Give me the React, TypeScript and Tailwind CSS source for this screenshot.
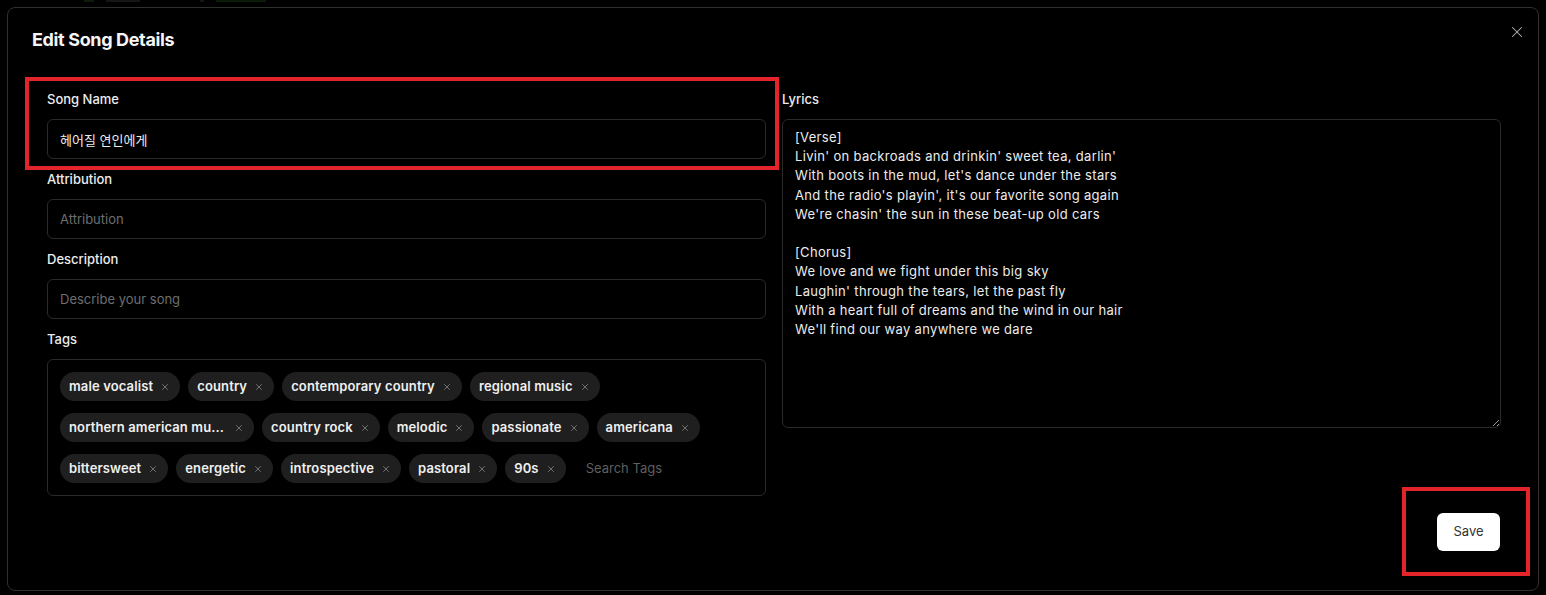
import { X } from 'lucide-react';

const tags = [
  'male vocalist',
  'country',
  'contemporary country',
  'regional music',
  'northern american mu...',
  'country rock',
  'melodic',
  'passionate',
  'americana',
  'bittersweet',
  'energetic',
  'introspective',
  'pastoral',
  '90s',
];

const lyrics = `[Verse]
Livin' on backroads and drinkin' sweet tea, darlin'
With boots in the mud, let's dance under the stars
And the radio's playin', it's our favorite song again
We're chasin' the sun in these beat-up old cars

[Chorus]
We love and we fight under this big sky
Laughin' through the tears, let the past fly
With a heart full of dreams and the wind in our hair
We'll find our way anywhere we dare`;

function Field(props: { label: string; children: React.ReactNode }) {
  return (
    <div className="flex flex-col gap-[10px]">
      <label className="h-5 text-[13px] font-medium leading-5 text-[#ececec]">{props.label}</label>
      {props.children}
    </div>
  );
}

const inputCls =
  'h-10 w-full rounded-md border border-[#2a2a2a] bg-black px-3 text-[13px] text-[#ececec] placeholder-[#6e6e6e] outline-none';

function Tag(props: { name: string }) {
  const cut = props.name.endsWith('...');
  return (
    <span className="flex h-[29px] items-center gap-[7px] rounded-full bg-[#1f1f1f] pl-[9px] pr-[10px] text-[13px] font-semibold tracking-[0.01em] text-[#f0f0f0]">
      <span className={cut ? 'mr-[3px] whitespace-nowrap' : 'whitespace-nowrap'}>{props.name}</span>
      <X size={10} strokeWidth={1.8} className="text-[#8a8a8a]" />
    </span>
  );
}

export default function App() {
  return (
    <div
      className="relative min-h-[595px] w-full bg-black"
      style={{ fontFamily: 'Inter, "Noto Sans CJK KR", sans-serif' }}
    >
      {/* faint page content peeking above the dialog */}
      <div className="flex h-[3px] items-start gap-3 pl-[84px]">
        <div className="h-[2px] w-[10px] bg-[#0e1a0a]" />
        <div className="h-[2px] w-[34px] bg-[#151515]" />
        <div className="ml-12 h-[2px] w-[4px] bg-[#151515]" />
        <div className="h-[2px] w-[50px] bg-[#0c1a08]" />
      </div>

      <div className="relative mx-[7px] mt-[4px] h-[584px] rounded-lg border border-[#303030] bg-black px-6 pt-5">
        <button className="absolute right-[12px] top-[15px] text-[#b5b5b5]" aria-label="Close">
          <X size={18} strokeWidth={1.4} />
        </button>

        <h2 className="text-lg font-bold leading-6 tracking-[-0.02em] text-[#f5f5f5]">Edit Song Details</h2>

        <div className="mt-[37px] pl-[15px] pr-[13px]">
          <div className="grid grid-cols-2 gap-4">
            <div className="flex flex-col gap-[10px]">
              <Field label="Song Name">
                <input className={inputCls} defaultValue="헤어질 연인에게" readOnly />
              </Field>
              <Field label="Attribution">
                <input className={inputCls} placeholder="Attribution" />
              </Field>
              <Field label="Description">
                <input className={inputCls} placeholder="Describe your song" />
              </Field>
              <Field label="Tags">
                <div className="flex flex-wrap items-center gap-x-2 gap-y-3 rounded-md border border-[#2a2a2a] p-3">
                  {tags.map((t) => (
                    <Tag key={t} name={t} />
                  ))}
                  <input
                    className="ml-3 w-28 bg-transparent text-[13px] text-[#ececec] placeholder-[#5f5f5f] outline-none"
                    placeholder="Search Tags"
                  />
                </div>
              </Field>
            </div>

            <div>
              <Field label="Lyrics">
                <textarea
                  readOnly
                  defaultValue={lyrics}
                  className="h-[309px] w-full resize-y rounded-md border border-[#2a2a2a] bg-black px-3 pb-2 pt-[8px] text-[13px] leading-[19.2px] tracking-[0.025em] text-[#ececec] outline-none [color-scheme:dark]"
                />
              </Field>
            </div>
          </div>

          <div className="mt-[17px] flex justify-end pr-px">
            <button className="h-[38px] w-[63px] rounded-md bg-white text-[13px] text-[#333]">Save</button>
          </div>
        </div>
      </div>

      {/* annotation boxes */}
      <div className="pointer-events-none absolute left-[25px] top-[77px] h-[93px] w-[754px] border-4 border-[#e3242b]" />
      <div className="pointer-events-none absolute left-[1402px] top-[487px] h-[89px] w-[128px] border-4 border-[#e3242b]" />
    </div>
  );
}
